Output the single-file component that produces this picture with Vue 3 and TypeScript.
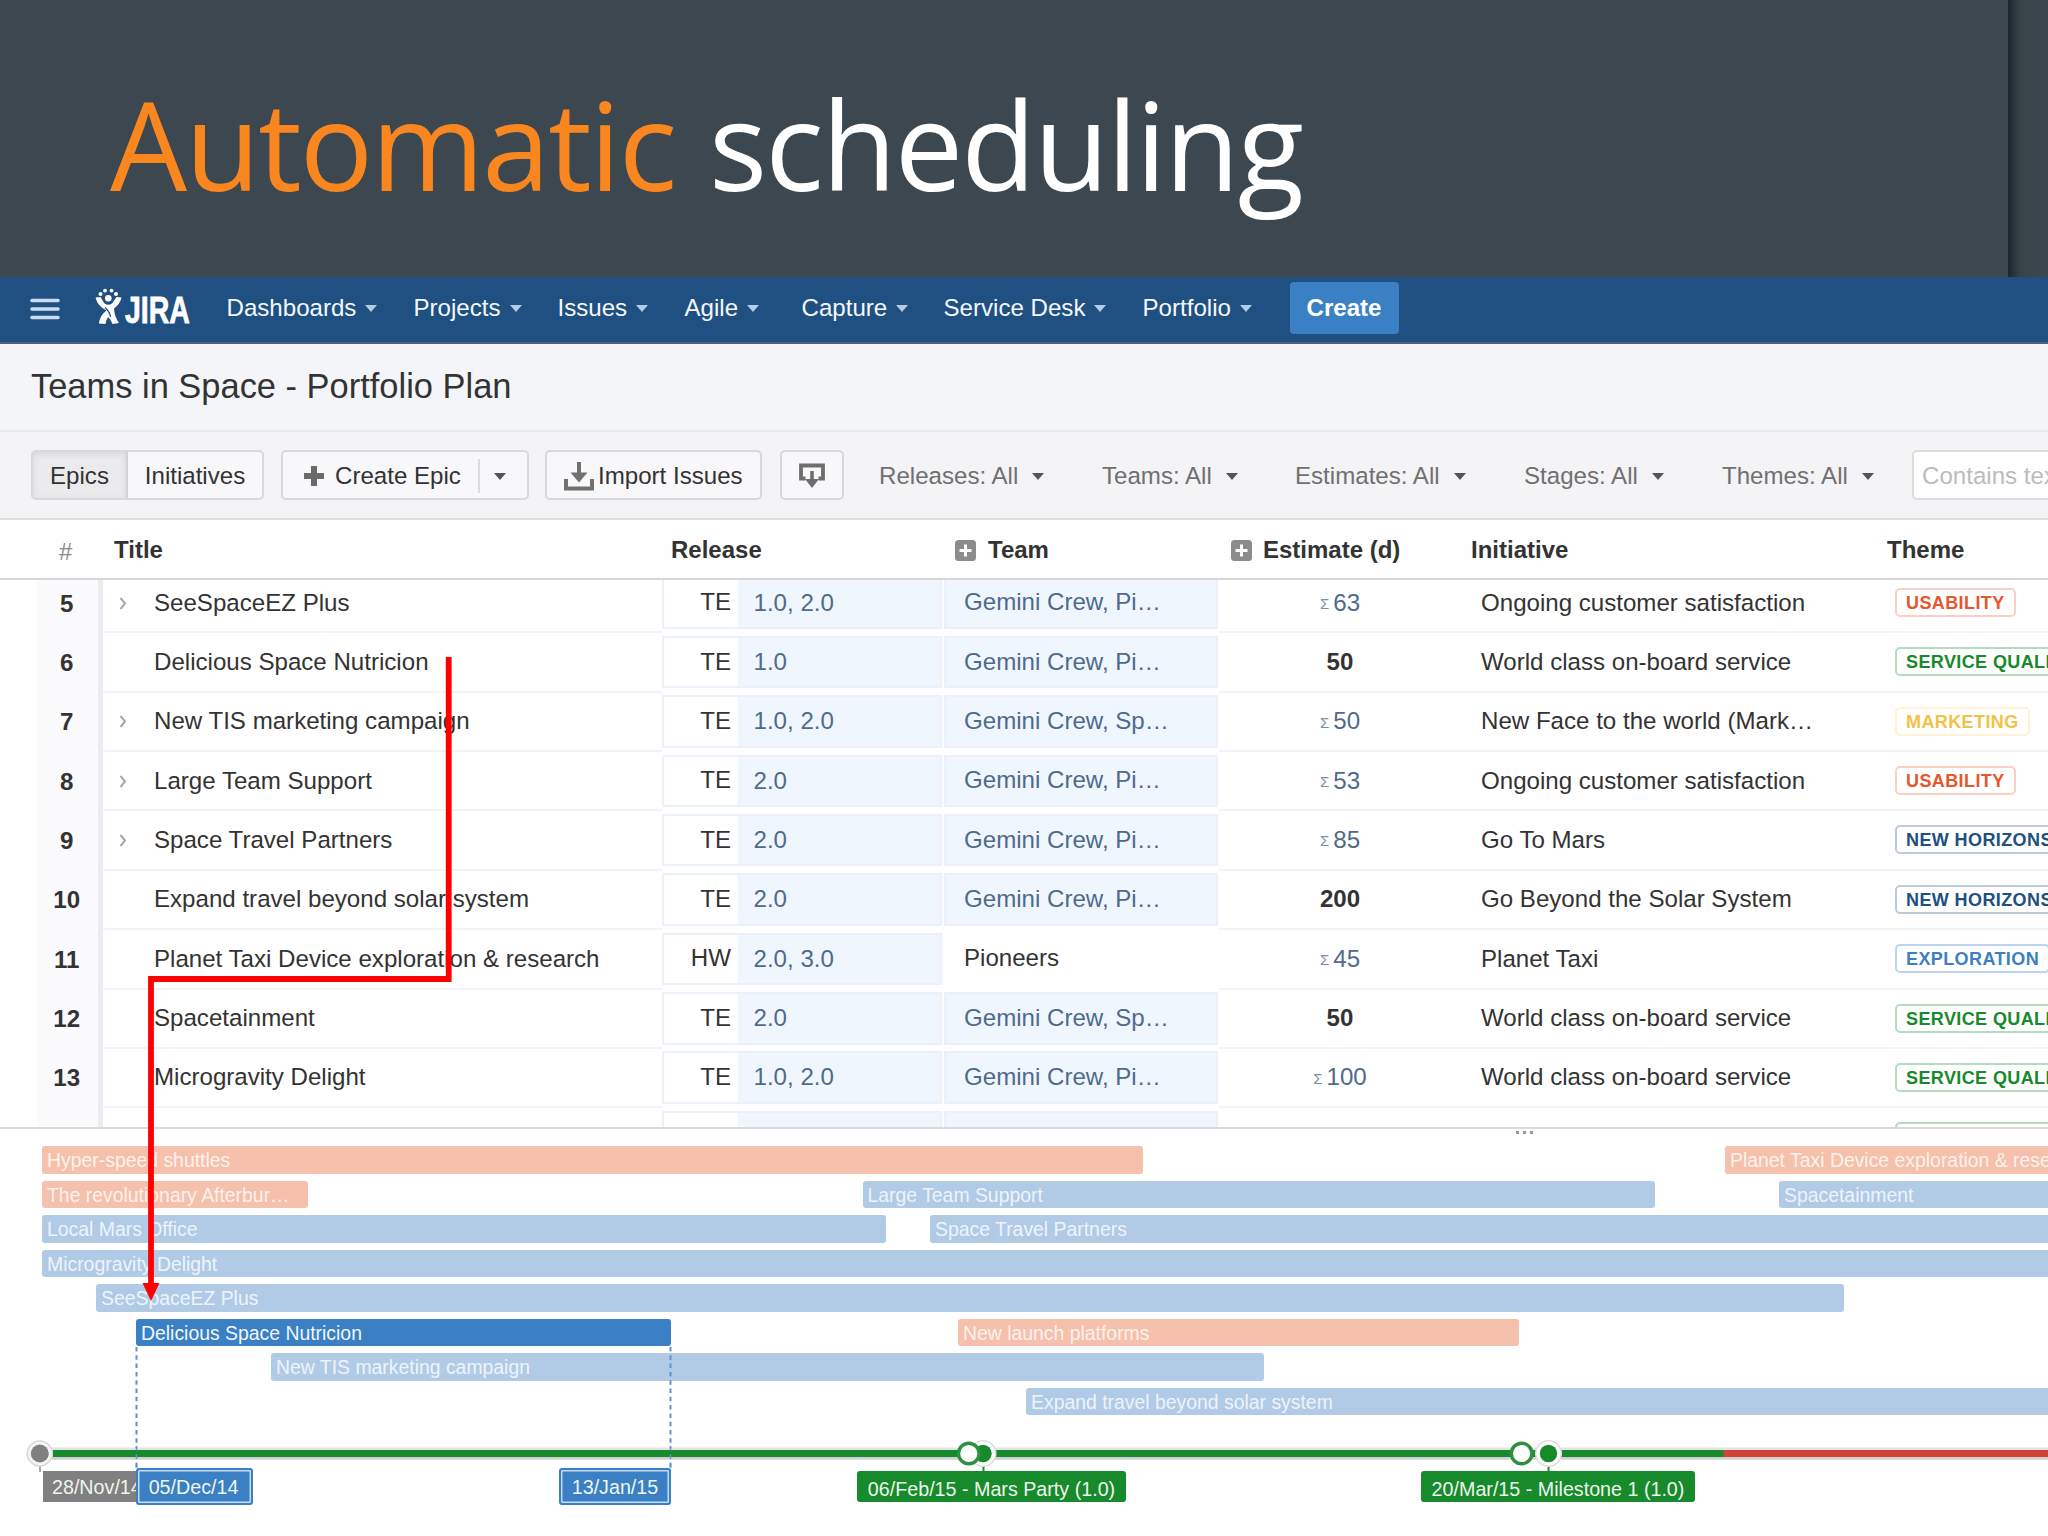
<script setup lang="ts">
interface Epic {
  n: number | string
  title: string
  expand?: boolean
  project: string
  release: string
  team: string
  plainTeam?: boolean
  sum?: boolean
  estimate: string
  initiative: string
  theme: string
  tone: string
}

interface Bar {
  label: string
  from: number
  to: number
  tone: 'blue' | 'orange' | 'active'
}

const menus = ['Dashboards', 'Projects', 'Issues', 'Agile', 'Capture', 'Service Desk', 'Portfolio']
const filters = ['Releases: All', 'Teams: All', 'Estimates: All', 'Stages: All', 'Themes: All']

const epics: Epic[] = [
  { n: 5, title: 'SeeSpaceEZ Plus', expand: true, project: 'TE', release: '1.0, 2.0', team: 'Gemini Crew, Pi…', sum: true, estimate: '63', initiative: 'Ongoing customer satisfaction', theme: 'USABILITY', tone: 'red' },
  { n: 6, title: 'Delicious Space Nutricion', project: 'TE', release: '1.0', team: 'Gemini Crew, Pi…', estimate: '50', initiative: 'World class on-board service', theme: 'SERVICE QUALITY', tone: 'green' },
  { n: 7, title: 'New TIS marketing campaign', expand: true, project: 'TE', release: '1.0, 2.0', team: 'Gemini Crew, Sp…', sum: true, estimate: '50', initiative: 'New Face to the world (Mark…', theme: 'MARKETING', tone: 'yellow' },
  { n: 8, title: 'Large Team Support', expand: true, project: 'TE', release: '2.0', team: 'Gemini Crew, Pi…', sum: true, estimate: '53', initiative: 'Ongoing customer satisfaction', theme: 'USABILITY', tone: 'red' },
  { n: 9, title: 'Space Travel Partners', expand: true, project: 'TE', release: '2.0', team: 'Gemini Crew, Pi…', sum: true, estimate: '85', initiative: 'Go To Mars', theme: 'NEW HORIZONS', tone: 'navy' },
  { n: 10, title: 'Expand travel beyond solar system', project: 'TE', release: '2.0', team: 'Gemini Crew, Pi…', estimate: '200', initiative: 'Go Beyond the Solar System', theme: 'NEW HORIZONS', tone: 'navy' },
  { n: 11, title: 'Planet Taxi Device exploration & research', project: 'HW', release: '2.0, 3.0', team: 'Pioneers', plainTeam: true, sum: true, estimate: '45', initiative: 'Planet Taxi', theme: 'EXPLORATION', tone: 'blue' },
  { n: 12, title: 'Spacetainment', project: 'TE', release: '2.0', team: 'Gemini Crew, Sp…', estimate: '50', initiative: 'World class on-board service', theme: 'SERVICE QUALITY', tone: 'green' },
  { n: 13, title: 'Microgravity Delight', project: 'TE', release: '1.0, 2.0', team: 'Gemini Crew, Pi…', sum: true, estimate: '100', initiative: 'World class on-board service', theme: 'SERVICE QUALITY', tone: 'green' },
  { n: '', title: '', project: '', release: '', team: '', estimate: '', initiative: '', theme: ' ', tone: 'green' },
]

const lanes: Bar[][] = [
  [
    { label: 'Hyper-speed shuttles', from: 42, to: 1142.5, tone: 'orange' },
    { label: 'Planet Taxi Device exploration & research', from: 1725, to: 2100, tone: 'orange' },
  ],
  [
    { label: 'The revolutionary Afterbur…', from: 42, to: 308, tone: 'orange' },
    { label: 'Large Team Support', from: 862.5, to: 1654.5, tone: 'blue' },
    { label: 'Spacetainment', from: 1779, to: 2100, tone: 'blue' },
  ],
  [
    { label: 'Local Mars Office', from: 42, to: 886, tone: 'blue' },
    { label: 'Space Travel Partners', from: 930, to: 2100, tone: 'blue' },
  ],
  [{ label: 'Microgravity Delight', from: 42, to: 2100, tone: 'blue' }],
  [{ label: 'SeeSpaceEZ Plus', from: 96, to: 1843.5, tone: 'blue' }],
  [
    { label: 'Delicious Space Nutricion', from: 136, to: 671, tone: 'active' },
    { label: 'New launch platforms', from: 958, to: 1519, tone: 'orange' },
  ],
  [{ label: 'New TIS marketing campaign', from: 271, to: 1264, tone: 'blue' }],
  [{ label: 'Expand travel beyond solar system', from: 1026, to: 2100, tone: 'blue' }],
]

const barStyle = (lane: Bar[], i: number) => ({
  marginLeft: `${lane[i].from - (i ? lane[i - 1].to : 0)}px`,
  width: `${lane[i].to - lane[i].from}px`,
})
</script>

<template>
  <div class="slide">
    <header class="banner">
      <h1><span class="accent">Automatic</span> <span class="rest">scheduling</span></h1>
      <div class="edge"></div>
    </header>

    <nav class="topnav">
      <svg class="burger" width="30" height="24" viewBox="0 0 30 24">
        <path d="M2 3.5H28M2 12H28M2 20.5H28" stroke="#c9dcee" stroke-width="3.6" stroke-linecap="round" />
      </svg>
      <div class="logo">
        <svg width="30" height="38" viewBox="0 0 30 38" fill="#fff">
          <circle cx="5.5" cy="6" r="2" /><circle cx="10" cy="2.6" r="1.9" /><circle cx="16.500" cy="2.600" r="1.900" /><circle cx="21" cy="6" r="2" />
          <circle cx="13.300" cy="10.200" r="3.300" />
          <path d="M0.500 9.500L5.500 9L9.500 15.500Q13.300 18 17 15.500L21.500 9L26.500 9.500Q25 16 19 20.500Q19.500 29 24 35L17.500 36Q15.500 31 13 29Q11 32 10.500 36L4 35.500Q5 27 11.500 22.500Q2.500 18 0.500 9.500Z" />
          <path d="M10 19.500Q15 24 15.500 29" stroke="#205081" stroke-width="1.300" fill="none" />
        </svg>
        <span class="word">JIRA</span>
      </div>
      <div class="menus">
        <span v-for="m in menus" :key="m" class="menu">{{ m }}<i class="caret"></i></span>
      </div>
      <span class="create">Create</span>
    </nav>

    <div class="plan">Teams in Space - Portfolio Plan</div>

    <div class="toolbar">
      <div class="btn toggle"><span class="on">Epics</span><span class="off">Initiatives</span></div>
      <div class="btn create-epic">
        <svg width="20" height="20" viewBox="0 0 20 20"><path d="M10 0V20M0 10H20" stroke="#6a6a6a" stroke-width="6" /></svg>
        <span class="cap">Create Epic</span>
        <span class="split"><i class="caret dark"></i></span>
      </div>
      <div class="btn import">
        <svg width="30" height="30" viewBox="0 0 30 30" fill="none" stroke="#707070">
          <path d="M2 18V27.500H28V18" stroke-width="4" /><path d="M15 1V13" stroke-width="4" /><path d="M6.500 11.500H23.500L15 21.500Z" fill="#707070" stroke="none" />
        </svg>
        <span>Import Issues</span>
      </div>
      <div class="btn export">
        <svg width="28" height="26" viewBox="0 0 28 26" fill="none" stroke="#6e6e6e">
          <path d="M7.500 15.500H3V2.500H25V15.500H20.500" stroke-width="3.800" /><path d="M14 8V18" stroke-width="3.600" /><path d="M7 16H21L14 25Z" fill="#6e6e6e" stroke="none" />
        </svg>
      </div>
      <div class="filters">
        <span v-for="f in filters" :key="f">{{ f }}<i class="caret dark"></i></span>
      </div>
      <div class="search">Contains text</div>
    </div>

    <div class="grid head">
      <span class="hash">#</span>
      <span class="h-title">Title</span>
      <span class="h-release">Release</span>
      <span class="h-team"><svg class="plus" viewBox="0 0 21 21"><rect width="21" height="21" rx="3.500" fill="#8c8c8c" /><path d="M10.500 4.500V16.500M4.500 10.500H16.500" stroke="#fff" stroke-width="3" /></svg>Team</span>
      <span class="h-est"><svg class="plus" viewBox="0 0 21 21"><rect width="21" height="21" rx="3.500" fill="#8c8c8c" /><path d="M10.500 4.500V16.500M4.500 10.500H16.500" stroke="#fff" stroke-width="3" /></svg>Estimate (d)</span>
      <span class="h-init">Initiative</span>
      <span class="h-theme">Theme</span>
    </div>

    <div class="body">
      <div v-for="(e, i) in epics" :key="i" class="grid row">
        <span class="num">{{ e.n }}</span>
        <span class="title">
          <svg v-if="e.expand" class="chev" width="8" height="13" viewBox="0 0 8 13"><path d="M1.500 1L6 6.500L1.500 12" fill="none" stroke="#a8a8a8" stroke-width="2" /></svg>
          <em>{{ e.title }}</em>
        </span>
        <span class="release"><b>{{ e.project }}</b><i>{{ e.release }}</i></span>
        <span class="team" :class="{ plain: e.plainTeam }">{{ e.team }}</span>
        <span class="est" :class="{ sum: e.sum }"><small v-if="e.sum">Σ</small>{{ e.estimate }}</span>
        <span class="init">{{ e.initiative }}</span>
        <span class="theme"><span class="badge" :class="e.tone">{{ e.theme }}</span></span>
      </div>
    </div>

    <div class="gantt">
      <svg class="grip" width="18" height="4" viewBox="0 0 18 4" fill="#999"><rect width="3" height="3" /><rect x="7" width="3" height="3" /><rect x="14" width="3" height="3" /></svg>
      <div v-for="(lane, l) in lanes" :key="l" class="lane">
        <div v-for="(b, i) in lane" :key="b.label" class="bar" :class="b.tone" :style="barStyle(lane, i)">{{ b.label }}</div>
      </div>

      <svg class="axis" width="2048" height="190" viewBox="0 1346 2048 190">
        <path d="M136.500 1347V1468M670.500 1347V1468" stroke="#5c93cf" stroke-width="2" stroke-dasharray="4.500 3.800" />
        <rect x="40" y="1447.500" width="2008" height="12" fill="#e4e4e6" />
        <rect x="40" y="1457" width="2008" height="2.500" fill="#cdd0d0" />
        <rect x="53" y="1450" width="1671" height="7" fill="#178a2b" />
        <rect x="1723.500" y="1450" width="325" height="7" fill="#d04437" />
        <path d="M136.500 1446V1468M670.500 1446V1468" stroke="#5c93cf" stroke-width="1.500" stroke-dasharray="4.500 3.800" />
        <path d="M40 1466V1472" stroke="#aaa" stroke-width="2" />
        <path d="M983.500 1466V1472M1548.500 1466V1472" stroke="#178a2b" stroke-width="2" />
        <circle cx="39.800" cy="1453.500" r="12.500" fill="#f6f6f6" stroke="#d8d8d8" stroke-width="1.500" />
        <circle cx="39.800" cy="1453.500" r="9" fill="#808080" />
        <g v-for="x in [983, 1548.5]" :key="x">
          <circle :cx="x" cy="1453.500" r="12.800" fill="#fff" stroke="#dcdcdc" stroke-width="1.500" />
          <circle :cx="x" cy="1453.500" r="8.700" fill="#178a2b" />
        </g>
        <circle v-for="x in [968.8, 1521.6]" :key="x" :cx="x" cy="1453.500" r="10.300" fill="#fff" stroke="#2d9140" stroke-width="3.400" />
      </svg>
      <span class="tag gray">28/Nov/14</span>
      <span class="tag sel start">05/Dec/14</span>
      <span class="tag sel end">13/Jan/15</span>
      <span class="tag green party">06/Feb/15 - Mars Party (1.0)</span>
      <span class="tag green milestone">20/Mar/15 - Milestone 1 (1.0)</span>
    </div>

    <svg class="arrow" width="2048" height="1536" viewBox="0 0 2048 1536">
      <path d="M448.700 657V979H151V1286" fill="none" stroke="#f00" stroke-width="5.800" />
      <path d="M142.500 1283H159.500L151 1301Z" fill="#f00" />
    </svg>
  </div>
</template>

<style>
body { margin: 0; overflow: hidden; }
</style>

<style scoped>
.slide {
  position: relative;
  width: 2048px;
  height: 1536px;
  overflow: hidden;
  background: #fff;
  color: #333;
  font: 24.100px/28px "Liberation Sans", Arial, sans-serif;
  white-space: nowrap;
}
.slide * { box-sizing: border-box; }

.banner { display: flex; justify-content: space-between; height: 277px; background: #3c474f; }
h1 {
  margin: 58.500px 0 0 110px;
  font: 400 122px/170px "Open Sans", "Noto Sans", sans-serif;
  letter-spacing: -1.900px;
  word-spacing: 4px;
  color: #fff;
}
.accent { color: #fa8620; }
.edge { width: 40px; background: linear-gradient(90deg, #1c262b 0, #263137 4px, #384349 12px, #3b474e 100%); }

.topnav { display: flex; align-items: center; height: 67px; padding: 0 0 3px 30px; background: #205081; border-bottom: 2px solid #4d6379; color: #f4f8fc; }
.burger { margin-top: 2px; }
.logo { display: flex; width: 94px; height: 38px; margin: 0 0 2px 35px; }
.logo svg { flex: none; }
.word { width: 64px; font: 700 37px/45px "Liberation Sans", Arial, sans-serif; color: #fff; -webkit-text-stroke: .8px #fff; transform: scaleX(.77); transform-origin: 0 0; }
.menus { display: grid; grid-template-columns: 187px 144px 127px 117px 142px 199px 147px; margin-left: 37.500px; }
.menu { display: flex; align-items: center; }
.caret { flex: none; width: 0; height: 0; margin: 1px 0 0 9px; border: 6.5px solid transparent; border-top: 7.5px solid #b4cde6; border-bottom: 0; }
.caret.dark { margin-left: 14px; border-top-color: #555; }
.create { width: 109px; height: 52px; border-radius: 4px; background: #3b7fc4; color: #fff; font-weight: 700; line-height: 52px; text-align: center; }

.plan { height: 88px; padding-left: 31px; border-bottom: 2px solid #e9e7eb; background: #f4f5f8; font-size: 34.450px; line-height: 85px; }

.toolbar { display: flex; height: 88px; padding: 18px 0 0 31px; border-bottom: 2px solid #dedce0; background: #f4f3f6; }
.btn { display: flex; flex: none; align-items: center; height: 50px; padding-top: 1px; border: 2px solid #d9d8db; border-radius: 5px; background: #f8f8fa; }
.toggle { width: 233px; padding-top: 0; }
.on { width: 95px; height: 100%; line-height: 47px; text-align: center; background: #ebebed; border-right: 2px solid #d3d2d5; box-shadow: inset 0 2px 6px #d6d6d8; }
.off { flex: 1; padding-top: 1px; text-align: center; }
.create-epic { width: 248px; margin-left: 17px; padding-left: 21px; }
.cap { margin-left: 11px; }
.split { display: flex; align-items: center; height: 34px; margin-left: 17px; border-left: 2px solid #dcdbde; }
.import { width: 217px; margin-left: 16px; padding-left: 17px; gap: 4px; }
.export { width: 64px; margin-left: 18px; justify-content: center; }
.filters { display: grid; flex: none; grid-template-columns: 223px 193px 229px 198px 190px; align-items: center; height: 51px; margin-left: 35px; color: #707070; }
.filters span { display: flex; align-items: center; }
.search { flex: none; width: 180px; height: 50px; padding-left: 8px; border: 2px solid #dcdbde; border-radius: 5px; background: #fff; line-height: 47px; color: #bcbcbc; }

.grid { display: grid; grid-template-columns: 103px 559px 280px 277px 242px 420px 200px; }
.head { height: 60px; padding-top: 2px; align-items: center; border-bottom: 2px solid #d6d5d8; background: #fefefe; font-weight: 700; font-size: 24px; }
.hash { padding: 3px 0 0 59px; font-weight: 400; color: #8a8a8a; }
.h-title { padding-left: 11px; }
.h-release { padding-left: 9px; }
.h-team, .h-est { display: flex; align-items: center; gap: 12px; }
.h-team { padding-left: 13px; }
.h-est { padding-left: 12px; gap: 11px; }
.h-init { padding-left: 10px; }
.h-theme { padding-left: 6px; }
.plus { width: 21px; height: 21px; }

.body { height: 547px; overflow: hidden; }
.row { height: 59.370px; }
.row:first-child { margin-top: -6px; }
.row > span { display: flex; align-items: center; height: 59.370px; padding-bottom: .300px; }
.row > .num { justify-content: center; margin-left: 37px; padding-right: 1.500px; border-right: 5px solid #eeecf1; background: #fbfafc; font-weight: 700; }
.title, .init, .theme, .est { border-bottom: 2px solid #f4f3f8; }
.title em { font-style: normal; margin-left: auto; width: 508px; }
.chev { margin: 1px 0 0 16px; }
.row > .release, .row > .team { height: 52.500px; margin-top: 2.500px; padding-bottom: 0; border: 2px solid #ebf0fb; }
.release { width: 280px; }
.release b { width: 74px; padding: 0 7px 1px 0; font-weight: 400; text-align: right; }
.release i { flex: 1; align-self: stretch; padding-left: 15.500px; background: #f0f6fe; color: #4f6a8c; font-style: normal; line-height: 47px; }
.row > .team { margin-left: 2px; width: 274px; padding: 0 0 1px 18px; background: #f0f6fe; color: #4f6a8c; }
.row > .team.plain { border-color: transparent; background: none; color: #333; }
.est { justify-content: center; font-weight: 700; }
.est.sum { font-weight: 400; color: #4f6a8c; }
.est small { margin: 3px 4px 0 0; font-size: 15px; line-height: 20px; color: #7d90a8; }
.init { padding-left: 20px; }
.theme { padding-left: 14px; }
.badge { height: 29px; padding: 0 9px; border: 2px solid; border-radius: 5px; font-size: 18px; font-weight: 700; line-height: 26px; letter-spacing: .4px; }
.red { color: #e8562c; border-color: #fad0c3; }
.green { color: #178a2b; border-color: #b5dcc0; }
.yellow { color: #f3c244; border-color: #fdf3d4; }
.navy { color: #205081; border-color: #bccadb; }
.blue.badge { color: #3b7fc4; border-color: #bcd4ee; }
.row:last-child .badge { min-width: 180px; }

.gantt { position: relative; height: 409px; padding-top: 17.300px; border-top: 2px solid #d9d8da; }
.grip { position: absolute; left: 1516px; top: 2px; }
.lane { display: flex; height: 27.400px; margin-bottom: 7.100px; }
.bar { flex: none; overflow: hidden; padding-left: 5px; border-radius: 3px; color: rgba(255, 255, 255, .8); font-size: 19.400px; line-height: 28.600px; }
.bar.blue { background: #b1cbe7; }
.bar.orange { background: #f5c1ac; }
.bar.active { background: #3b7fc4; color: #f0f6fc; }
.axis { position: absolute; left: 0; top: 217px; }
.tag { position: absolute; top: 342px; height: 31px; border-radius: 3px; font-size: 19.700px; line-height: 33px; color: #eef6ee; text-align: center; }
.gray { left: 43px; width: 93px; overflow: hidden; padding-left: 9px; border-radius: 0; background: #808080; text-align: left; }
.sel { top: 339px; height: 37px; padding-right: 2px; background: #3b7fc4; border: 2px solid #3b7fc4; box-shadow: inset 0 0 0 1.500px #c5dcf3; line-height: 35px; }
.start { left: 136px; width: 117px; }
.end { left: 559px; width: 112px; padding-right: 0; }
.green.tag { background: #178a2b; line-height: 36px; }
.party { left: 857px; width: 269px; }
.milestone { left: 1421px; width: 274px; }
.arrow { position: absolute; left: 0; top: 0; pointer-events: none; }
</style>
